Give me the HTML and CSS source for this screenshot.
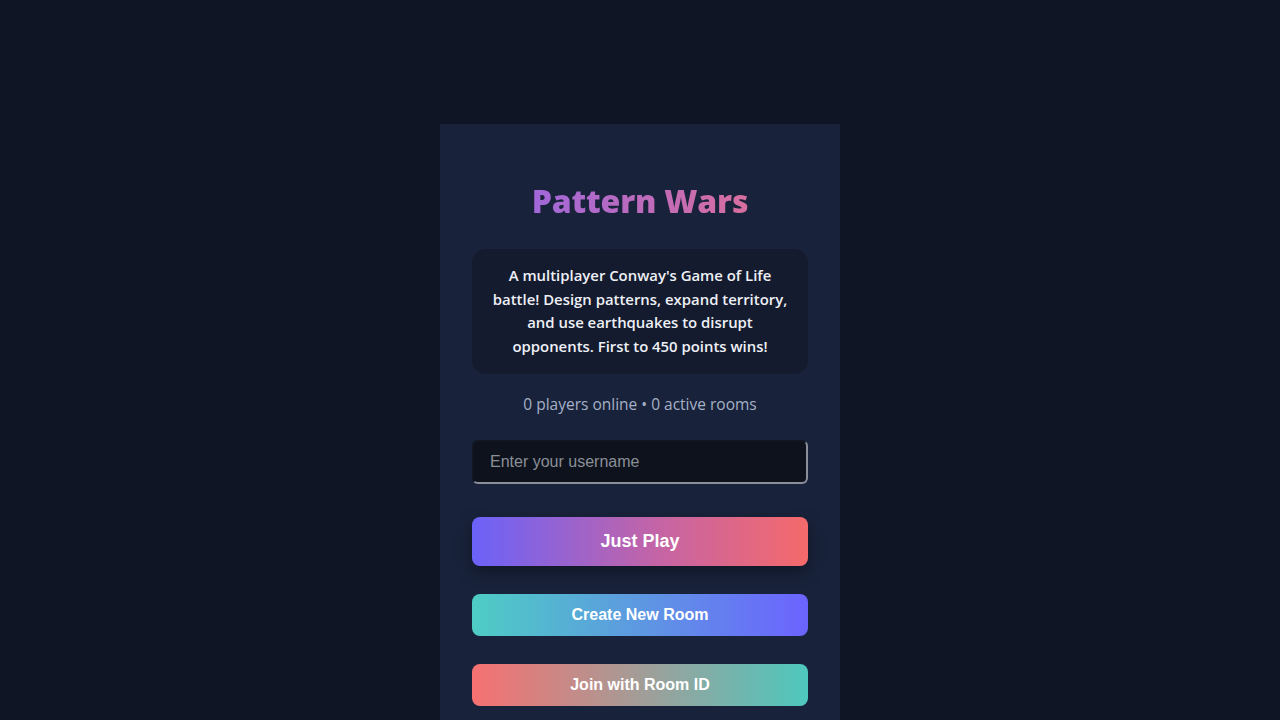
FILE: index.html
```html
<!DOCTYPE html>
<html lang="en">
<head>
<meta charset="utf-8">
<title>Pattern Wars</title>
<link rel="stylesheet" href="styles.css">
</head>
<body>
<main class="page">
  <section class="card">
    <h1 class="title">Pattern Wars</h1>
    <div class="desc">A multiplayer Conway's Game of Life battle! Design patterns, expand territory, and use earthquakes to disrupt opponents. First to 450 points wins!</div>
    <p class="stats">0 players online • 0 active rooms</p>
    <input class="username" type="text" placeholder="Enter your username">
    <button class="btn btn-play">Just Play</button>
    <button class="btn btn-create">Create New Room</button>
    <button class="btn btn-join">Join with Room ID</button>
  </section>
</main>
</body>
</html>
```
FILE: styles.css
```css
html, body {
  margin: 0;
  padding: 0;
  background: #0f1524;
  height: 100%;
  overflow: hidden;
}
body {
  font-family: "Open Sans", "Noto Sans", sans-serif;
}
.page {
  display: flex;
  justify-content: center;
  padding-top: 124px;
}
.card {
  width: 400px;
  box-sizing: border-box;
  background: #18223a;
  padding: 53px 32px 40px;
  display: flex;
  flex-direction: column;
  height: 596px;
  overflow: hidden;
}
.title {
  margin: 0;
  text-align: center;
  font-size: 32px;
  line-height: 48px;
  font-weight: 800;
  letter-spacing: -0.2px;
  background: linear-gradient(90deg, #9166ea, #e7708f);
  -webkit-background-clip: text;
  background-clip: text;
  color: transparent;
}
.desc {
  margin-top: 24px;
  background: #141b2e;
  border-radius: 14px;
  padding: 15px 15px 16px;
  color: #eef0f6;
  font-size: 14.9px;
  line-height: 23.5px;
  font-weight: 600;
  text-align: center;
}
.stats {
  margin: 19px 0 0;
  text-align: center;
  color: #a6b1c7;
  font-size: 15.5px;
  line-height: 22px;
}
.username {
  margin-top: 25px;
  height: 44px;
  flex: none;
  box-sizing: border-box;
  background: #0e121c;
  border: 2px solid;
  border-color: #121622 #8a8f99 #8a8f99 #121622;
  border-radius: 6px;
  padding: 0 16px;
  font-family: "Liberation Sans", Arial, sans-serif;
  font-size: 16px;
  color: #ddd;
  outline: none;
}
.username::placeholder {
  color: #8a8f98;
}
.btn {
  flex: none;
  border: none;
  color: #fff;
  font-family: "Liberation Sans", Arial, sans-serif;
  font-weight: 700;
  border-radius: 8px;
  cursor: pointer;
}
.btn-play {
  margin-top: 33px;
  height: 49px;
  font-size: 18px;
  background: linear-gradient(90deg, #6b62f9, #c464a6 55%, #f56a6b);
  box-shadow: 0 6px 16px rgba(0, 0, 0, 0.35);
}
.btn-create {
  margin-top: 28px;
  height: 42px;
  font-size: 16px;
  background: linear-gradient(90deg, #4ecdc4, #6c63ff);
}
.btn-join {
  margin-top: 28px;
  height: 42px;
  font-size: 16px;
  background: linear-gradient(90deg, #f77171, #4ec8be);
}
```
